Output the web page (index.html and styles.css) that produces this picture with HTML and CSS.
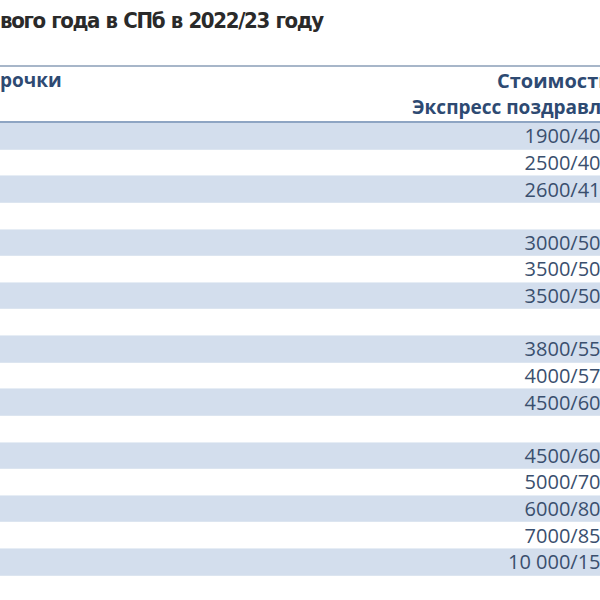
FILE: index.html
```html
<!DOCTYPE html>
<html lang="ru">
<head>
<meta charset="utf-8">
<link rel="stylesheet" href="styles.css">
</head>
<body>
<div class="page">
  <h1 class="title">вого года в СПб в 2022/23 году</h1>
  <div class="table">
    <div class="head">
      <div class="head-left">рочки</div>
      <div class="head-right">
        <div class="head-line1">Стоимость, руб.</div>
        <div class="head-line2">Экспресс поздравление/на дому</div>
      </div>
    </div>
    <div class="rows">
      <div class="row alt"><span></span><span class="val">1900/4000</span></div>
      <div class="row"><span></span><span class="val">2500/4000</span></div>
      <div class="row alt"><span></span><span class="val">2600/4100</span></div>
      <div class="row"><span></span><span class="val"></span></div>
      <div class="row alt"><span></span><span class="val">3000/5000</span></div>
      <div class="row"><span></span><span class="val">3500/5000</span></div>
      <div class="row alt"><span></span><span class="val">3500/5000</span></div>
      <div class="row"><span></span><span class="val"></span></div>
      <div class="row alt"><span></span><span class="val">3800/5500</span></div>
      <div class="row"><span></span><span class="val">4000/5700</span></div>
      <div class="row alt"><span></span><span class="val">4500/6000</span></div>
      <div class="row"><span></span><span class="val"></span></div>
      <div class="row alt"><span></span><span class="val">4500/6000</span></div>
      <div class="row"><span></span><span class="val">5000/7000</span></div>
      <div class="row alt"><span></span><span class="val">6000/8000</span></div>
      <div class="row"><span></span><span class="val">7000/8500</span></div>
      <div class="row alt"><span></span><span class="val">10 000/15 000</span></div>
    </div>
  </div>
</div>
</body>
</html>
```
FILE: styles.css
```css
html, body {
  margin: 0;
  padding: 0;
  background: #ffffff;
}

.page {
  width: 600px;
  height: 600px;
  overflow: hidden;
}

.title {
  margin: 0;
  height: 65px;
  padding-top: 7px;
  box-sizing: border-box;
  font-family: "DejaVu Sans Condensed", "DejaVu Sans", sans-serif;
  font-stretch: condensed;
  font-weight: bold;
  font-size: 22px;
  line-height: 28px;
  letter-spacing: -1.35px;
  word-spacing: 1px;
  color: #2a2a2a;
  white-space: nowrap;
}

.table {
  width: 734px;
  font-family: "Open Sans", "Noto Sans", sans-serif;
  font-size: 20px;
}

.head {
  display: grid;
  grid-template-columns: 410px 324px;
  border-top: 2px solid #a7b6c9;
  border-bottom: 2px solid #8ea5c3;
  height: 54px;
  color: #2e4a72;
  font-weight: bold;
  font-size: 19px;
  line-height: 27px;
}

.head-left {
  white-space: nowrap;
}

.head-right {
  white-space: nowrap;
}

.head-line1 {
  padding-left: 87px;
  font-size: 20px;
}

.head-line2 {
  padding-left: 2px;
}

.rows {
  display: grid;
  grid-auto-rows: 26.625px;
}

.row {
  display: grid;
  grid-template-columns: 410px 328px;
  align-items: center;
  color: #3a4f6e;
  box-shadow: inset 0 -1px 0 #e6edf5;
}

.row.alt {
  background: #d3deed;
  box-shadow: inset 0 -1px 0 #dce5f0;
}

.val {
  text-align: center;
  white-space: nowrap;
  line-height: 26px;
}
```
